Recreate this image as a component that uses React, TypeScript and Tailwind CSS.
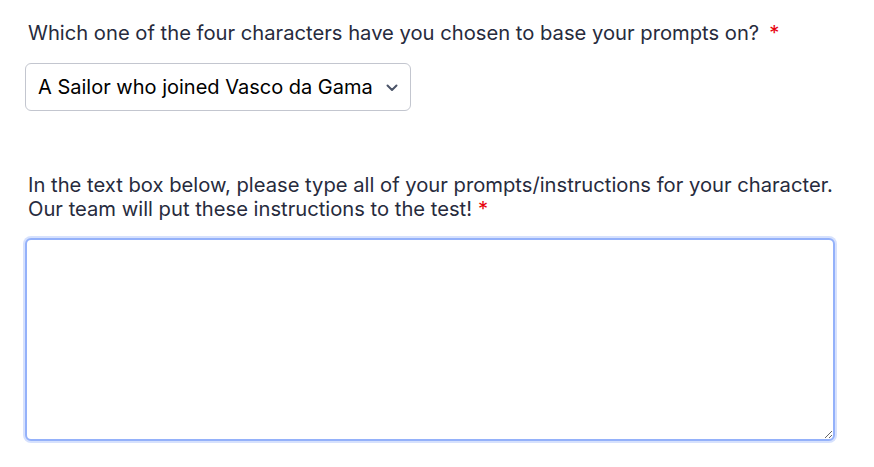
export default function App() {
  return (
    <div className="min-h-screen bg-white pl-[25px] pt-[21px] font-['Inter',sans-serif] text-[#272b3d]">
      {/* 캐릭터 선택 */}
      <div className="flex flex-col gap-[18px]">
        <label className="pl-[3px] text-[20.2px] leading-[24px]">
          Which one of the four characters have you chosen to base your prompts on?
          <span className="ml-[10px] text-red-600">*</span>
        </label>
        <div className="relative w-[386px]">
          <select
            defaultValue="sailor"
            className="h-[48px] w-full appearance-none rounded-[6px] border border-[#c3c6cf] bg-white pl-[12px] pr-[26px] text-[20px] text-black outline-none"
          >
            <option value="sailor">A Sailor who joined Vasco da Gama</option>
          </select>
          <svg
            viewBox="0 0 12 8"
            className="pointer-events-none absolute right-[13px] top-[21px] h-[8px] w-[12px]"
            fill="none"
            stroke="#4b5468"
            strokeWidth={2}
            strokeLinecap="round"
            strokeLinejoin="round"
          >
            <path d="M1.5 1.5 6 6l4.5-4.5" />
          </svg>
        </div>
      </div>

      {/* 프롬프트 입력 */}
      <div className="mt-[62px] flex flex-col gap-[17px]">
        <label className="pl-[3px] text-[20.2px] leading-[24px]">
          In the text box below, please type all of your prompts/instructions for your character.
          <br />
          Our team will put these instructions to the test!
          <span className="ml-[6px] text-red-600">*</span>
        </label>
        <textarea
          autoFocus
          className="h-[203px] w-[810px] rounded-[6px] border-2 border-[#94b1fa] bg-white outline-none ring-2 ring-[#d6e1fd]"
        />
      </div>
    </div>
  );
}
